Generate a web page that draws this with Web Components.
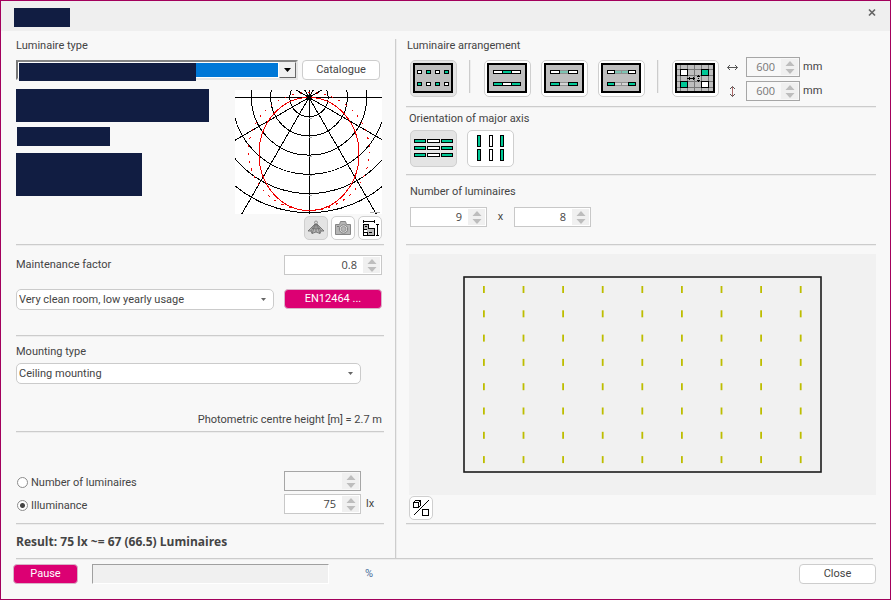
<!DOCTYPE html>
<html lang="en">
<head>
<meta charset="utf-8">
<title>Luminaire layout</title>
<style>
  body { margin: 0; background: #f8f8f8; }
</style>
</head>
<body>
<lux-dialog>
  <luminaire-panel slot="left"></luminaire-panel>
  <arrangement-panel slot="right"></arrangement-panel>
</lux-dialog>

<script>
const BASE = `
  :host, * { box-sizing: border-box; }
  button, input, select { font: inherit; color: inherit; margin: 0; }
  hr { border: 0; height: 2px; margin: 0; background: linear-gradient(#cccccc 50%, #ededed 50%); }
  .row { display: flex; align-items: center; }
  .grow { flex: 1; min-width: 0; }
  svg { display: block; }
`;

function define(name, css, html, options = {}) {
  const template = document.createElement('template');
  template.innerHTML = `<style>${BASE}${css}</style>${html}`;
  customElements.define(name, class extends HTMLElement {
    static formAssociated = !!options.form;
    constructor() {
      super();
      this.attachShadow({ mode: 'open', delegatesFocus: !!options.form });
      this.shadowRoot.append(template.content.cloneNode(true));
    }
    connectedCallback() { options.connected?.call(this, this.shadowRoot); }
  });
}

/* Numeric box with up and down steppers */
define('spin-box', `
  :host { display: flex; height: 20px; width: 77px; border: 1px solid #c8c8c8; background: #fff; }
  :host([muted]) { border-color: #a6a6a6; background: #f8f8f8; color: #777; }
  input { flex: 1; min-width: 0; border: 0; outline: 0; padding: 0 5px 0 0; background: none; text-align: right;
          font: 11px/18px "Open Sans", "Noto Sans", sans-serif; }
  .steps { width: 17px; margin: 1px; background: #f0f0f0; display: flex; flex-direction: column; align-items: center; justify-content: space-between; padding: 1px 0; }
  button { border: 0; padding: 0; background: none; height: 6px; width: 10px; }
`, `
  <input type="text" inputmode="decimal">
  <div class="steps">
    <button type="button" aria-label="Increase"><svg width="10" height="5" viewBox="0 0 10 5"><path d="M5 0L9.500 5H.5z" fill="#bdbdbd"/></svg></button>
    <button type="button" aria-label="Decrease"><svg width="10" height="5" viewBox="0 0 10 5"><path d="M.5 0h9L5 5z" fill="#bdbdbd"/></svg></button>
  </div>
`, { form: true, connected(root) {
  const input = root.querySelector('input');
  input.value = this.getAttribute('value') || '';
  input.setAttribute('aria-label', this.getAttribute('name'));
} });

/* Plain or accented push button */
define('push-button', `
  :host { display: block; height: 20px; }
  button { display: block; width: 100%; height: 100%; padding: 0; border: 1px solid #cdcdcd; border-radius: 4px; background: #fff; line-height: 18px; }
  :host([accent]) button { background: #dc0073; border-color: #d8b4c8; color: #fff; }
`, `<button type="button"><slot></slot></button>`);

/* Toggle button holding an icon */
define('tool-button', `
  :host { display: block; width: 47px; height: 37px; }
  :host([small]) { width: 24px; height: 24px; }
  button { width: 100%; height: 100%; padding: 0; display: flex; align-items: center; justify-content: center; border: 1px solid #cfcfcf; border-radius: 5px; background: #fff; }
  :host([pressed]) button { background: #e4e4e4; }
`, `<button type="button"><slot></slot></button>`, { connected(root) {
  const button = root.querySelector('button');
  button.setAttribute('aria-label', this.getAttribute('name'));
  button.setAttribute('aria-pressed', this.hasAttribute('pressed'));
} });

/* Dark block over private text */
define('masked-block', `:host { display: block; background: #111d42; }`, ``);

/* Polar light distribution curve */
const rays = [0, 30, 60, 90, 120, 150].map(a => {
  const r = a * Math.PI / 180, x = 170 * Math.cos(r), y = 170 * Math.sin(r);
  return `<path d="M${74 - x} ${7.5 - y}L${74 + x} ${7.5 + y}"/>`;
}).join('');
const rings = [1, 2, 3, 4, 5, 6].map(n => `<circle cx="74" cy="7.500" r="${n * 19.2}"/>`).join('');
define('polar-curve', `
  :host { display: block; background: #fff; }
`, `
  <svg width="147" height="124" viewBox="0 0 147 124" fill="none" shape-rendering="crispEdges" role="img" aria-label="Light distribution">
    <g stroke="#000">${rings}${rays}</g>
    <g stroke="#f00000"><ellipse cx="74" cy="64" rx="50" ry="56.500"/>
      <ellipse cx="74" cy="61.500" rx="60.500" ry="59" stroke-dasharray="2 6"/></g>
    <path d="M72 5h4v5h-4z" fill="#000"/>
    <path d="M74 28.500h3M74 47.500h3M74 66.500h3M74 85.500h3M74 105.500h3M135 122.500h4M140 122.500h5" stroke="#aaa"/>
  </svg>
`);

define('luminaire-panel', `
  :host { display: block; padding: 0 11px 0 15px; }
  .end { padding-right: 2px; }
  .type { margin-top: 7px; gap: 4px; padding-right: 4px; }
  .classic { position: relative; display: flex; height: 20px; padding: 1px; background: #fff;
             border: 2px solid; border-color: #858585 #e6e6e6 #e6e6e6 #777; }
  .classic select { flex: 1; min-width: 0; appearance: none; border: 0; border-radius: 0; background: #0078d7; }
  .classic .drop { width: 17px; background: #f0f0f0; border: 1px solid; border-color: #f0f0f0 #696969 #696969 #f0f0f0; display: flex; align-items: center; justify-content: center; margin: -1px; margin-left: 1px; }
  .classic masked-block { position: absolute; left: 1px; top: 1px; bottom: -3px; width: 63.5%; }
  .photo { margin-top: 9px; display: flex; justify-content: space-between; }
  .m1 { width: 193px; height: 33px; }
  .m2 { width: 93px; height: 19px; margin: 5px 0 7px 1px; }
  .m3 { width: 126px; height: 43px; }
  .curve { padding-top: 1px; }
  .tools { display: flex; justify-content: flex-end; gap: 3px; margin: 2px 0 4px; }
  .select { position: relative; display: grid; height: 21px; }
  .select select { appearance: none; width: 100%; border: 1px solid #cbcbcb; border-radius: 5px; background: #fff; padding: 0 20px 0 2px; }
  .select svg { position: absolute; right: 8px; top: 9px; pointer-events: none; }
  .factor { padding: 9px 2px 14px 0; justify-content: space-between; }
  .wide { width: 98px; }
  .room { gap: 10px; align-items: flex-start; padding: 0 2px 25px 0; }
  .en { width: 98px; }
  .mount { display: block; margin: 8px 0 4px; }
  .mount-select { margin-right: 23px; }
  .height { text-align: right; margin: 29px 2px 4px; }
  .targets { margin: 38px 0 9px; display: grid; grid-template-columns: 1fr 77px 18px; gap: 3px 5px; align-items: center; }
  .radio { display: flex; align-items: center; gap: 3px; padding-top: 3px; }
  input[type=radio] { appearance: none; width: 11px; height: 11px; margin: 0 0 0 1px; border: 1px solid #8c8c8c; border-radius: 50%; background: #fff; }
  input[type=radio]:checked { background: radial-gradient(circle, #444 0 2px, #fff 3px); }
  .result { margin: 10px 0 9px; font: bold 12px/14px "Open Sans", "Noto Sans", sans-serif; }
`, `
  <label for="type">Luminaire type</label>
  <div class="row type">
    <div class="classic grow"><select id="type"><option></option></select>
      <span class="drop"><svg width="7" height="4" viewBox="0 0 7 4"><path d="M0 0h7L3.500 4z"/></svg></span>
      <masked-block></masked-block></div>
    <push-button style="width:78px">Catalogue</push-button>
  </div>
  <div class="photo end">
    <div><masked-block class="m1"></masked-block><masked-block class="m2"></masked-block><masked-block class="m3"></masked-block></div>
    <div class="curve"><polar-curve></polar-curve>
      <div class="tools">
        <tool-button small pressed name="Light distribution"><svg width="18" height="16" viewBox="0 0 18 16"><path d="M9 3L1 11l3 0L5 13.500l4-1.500 4 1.500 1-2.500 3 0z" fill="#b5b5b5" stroke="#666" stroke-width=".8"/><path d="M9 3L4 11M9 3l-4 10.500M9 3v9M9 3l4 10.500M9 3l5 8M4.500 8q4.500 2 9 0" fill="none" stroke="#666" stroke-width=".7"/><circle cx="9" cy="2.500" r="1.500" fill="#ddd" stroke="#777" stroke-width=".7"/></svg></tool-button>
        <tool-button small name="Photo"><svg width="16" height="16" viewBox="0 0 16 16"><path d="M.5 4.500h4l1-3h5l1 3h4v10H.5z" fill="#b5b5b5" stroke="#858585"/><circle cx="8.500" cy="9" r="4.200" fill="#ddd" stroke="#808080"/><circle cx="8.500" cy="9" r="2.500" fill="#b5b5b5" stroke="#999"/><path d="M2 6.500h2" stroke="#777"/></svg></tool-button>
        <tool-button small name="Dimensions"><svg width="17" height="17" viewBox="0 0 17 17" shape-rendering="crispEdges"><path d="M1 1.500h12M1.500 0v3M12.500 0v3M15.500 4v12M14 4.500h3M14 15.500h3" stroke="#000" fill="none"/><path d="M1.500 4.500h5v4h6v7h-11z" fill="#bbb" stroke="#000"/><path d="M2 10h3v5H2z" fill="#fff"/><path d="M3 6.500h2M1 9.500h4M1 12.500h4M5.500 12v4M7 12.500h3" stroke="#000" fill="none"/></svg></tool-button>
      </div></div>
  </div>
  <hr>
  <div class="row factor"><label for="mf">Maintenance factor</label><spin-box id="mf" class="wide" name="Maintenance factor" value="0.8"></spin-box></div>
  <div class="row room">
    <div class="select grow"><select aria-label="Room condition"><option>Very clean room, low yearly usage</option></select><svg width="5" height="3" viewBox="0 0 5 3"><path d="M0 0h5L2.500 3z" fill="#666"/></svg></div>
    <push-button accent class="en">EN12464 ...</push-button>
  </div>
  <hr>
  <label class="mount" for="mount">Mounting type</label>
  <div class="select mount-select"><select id="mount"><option>Ceiling mounting</option></select><svg width="5" height="3" viewBox="0 0 5 3"><path d="M0 0h5L2.500 3z" fill="#666"/></svg></div>
  <div class="height">Photometric centre height [m] = 2.7 m</div>
  <hr>
  <div class="targets">
    <label class="radio"><input type="radio" name="goal">Number of luminaires</label><spin-box muted name="Number of luminaires"></spin-box><span></span>
    <label class="radio"><input type="radio" name="goal" checked>Illuminance</label><spin-box name="Illuminance" value="75"></spin-box><span>lx</span>
  </div>
  <hr>
  <div class="result">Result: 75 lx ~= 67 (66.5) Luminaires</div>
`);

/* Icon parts: outlined bars in the icons' 40 by 30 grid */
const G = '#00c896', W = '#fff';
const bar = (x, y, w, h, fill, stroke = '#000') =>
  `<rect x="${x + .5}" y="${y + .5}" width="${w - 1}" height="${h - 1}" fill="${fill}" stroke="${stroke}"/>`;
const icon = inner => `<svg width="41" height="31" viewBox="0 0 41 31" shape-rendering="crispEdges">${inner}</svg>`;
const board = inner => icon(`<rect x="1" y="1" width="38" height="28" fill="#bfbfbf" stroke="#000" stroke-width="2"/>${inner}`);
const FG = '#7cc4b2', FW = '#d4d4d4', FS = '#909090';
const single = board([4, 13, 22, 31].map((x, i) => bar(x, 7, 5, 4, i % 2 ? G : W) + bar(x, 19, 5, 4, i % 2 ? W : G)).join(''));
const lines = board(bar(6, 7, 10, 4, W) + bar(24, 7, 10, 4, W) + bar(15, 7, 10, 4, G) + bar(6, 19, 10, 4, G) + bar(24, 19, 10, 4, G) + bar(15, 19, 10, 4, W));
const gap1 = board(bar(15, 7, 10, 4, FG, FS) + bar(15, 19, 10, 4, FW, FS) + bar(6, 7, 10, 4, W) + bar(24, 7, 10, 4, W) + bar(6, 19, 10, 4, G) + bar(24, 19, 10, 4, G));
const gap2 = board([13, 20].map(x => bar(x, 7, 8, 4, FG, FS) + bar(x, 19, 8, 4, FW, FS)).join('') + bar(6, 7, 8, 4, W) + bar(27, 7, 8, 4, W) + bar(6, 19, 8, 4, G) + bar(27, 19, 8, 4, G));
const raster = board(`<path d="M5.500 2v26M12.500 2v26M19.500 2v26M26.500 2v26M33.500 2v26M2 6.500h36M2 12.500h36M2 18.500h36M2 24.500h36" stroke="#777"/>`
  + bar(5, 6, 8, 7, W) + bar(26, 6, 8, 7, G) + bar(5, 18, 8, 7, G) + bar(26, 18, 8, 7, W)
  + `<path d="M12 15.500h8M14.500 14v3M18.500 14v3M23.500 12v2M23.500 15v1M23.500 17v2M22 13.500h3M22 17.500h3" stroke="#000"/>`);
const across = icon([6, 13, 20].map(y => bar(1, y, 12, 4, G) + bar(14, y, 13, 4, W) + bar(28, y, 12, 4, G)).join(''));
const along = icon([2, 16].map(y => bar(7, y, 4, 12, G) + bar(19, y, 4, 12, W) + bar(30, y, 4, 12, G)).join(''));

/* Plan of the room: 9 by 8 luminaires */
let marks = '';
for (let r = 0; r < 8; r++) for (let c = 0; c < 9; c++)
  marks += `<rect x="${74 + c * 39.6}" y="${32 + r * 24.3}" width="1.800" height="7"/>`;

define('arrangement-panel', `
  :host { display: flex; flex-direction: column; padding: 0 14px 33px 10px; border-left: 1px solid #cdcdcd; box-shadow: inset 1px 0 #ededed; }
  .title { padding-left: 1px; }
  .arrange { display: flex; flex-wrap: wrap; align-items: flex-start; margin: 4px 0 5px; padding-left: 4px; }
  .set { display: flex; gap: 10px; padding-top: 3px; }
  .sep { width: 2px; height: 33px; margin: 3px 13px 0 12px; background: linear-gradient(90deg, #ccc 50%, #ededed 50%); }
  .spacing { display: grid; grid-template-columns: 11px 54px auto; gap: 4px 8px; align-items: center; margin-left: 8px; }
  .spacing spin-box { width: 54px; }
  .unit { margin-left: -5px; }
  .spacing svg { justify-self: center; }
  .sub { padding: 4px 0 4px 3px; }
  .axis { display: flex; gap: 10px; padding: 0 0 7px 4px; }
  .count { padding: 9px 0 8px 4px; }
  .counts { padding: 0 0 17px 4px; gap: 10px; }
  .counts span { width: 7px; text-align: center; }
  .plan { flex: 1; margin: 8px 0 1px 3px; background: #f1f1f1; display: flex; }
  .plan svg { width: 100%; height: auto; margin: auto; }
  .view { margin: 0 0 3px 3px; }
`, `
  <div class="title">Luminaire arrangement</div>
  <div class="arrange">
    <div class="set"><tool-button pressed name="Single">${single}</tool-button></div>
    <div class="sep"></div>
    <div class="set"><tool-button name="Lines">${lines}</tool-button><tool-button name="Lines, single gap">${gap1}</tool-button><tool-button name="Lines, double gap">${gap2}</tool-button></div>
    <div class="sep"></div>
    <div class="set"><tool-button name="Ceiling grid">${raster}</tool-button></div>
    <div class="spacing">
      <svg width="11" height="7" viewBox="0 0 11 7" fill="none" stroke="#555"><path d="M.5 3.500h10M3 1L.5 3.500 3 6M8 1l2.500 2.500L8 6"/></svg>
      <spin-box muted name="Horizontal grid" value="600"></spin-box><span class="unit">mm</span>
      <svg width="7" height="11" viewBox="0 0 7 11" fill="none" stroke="#555"><path d="M3.500 .5v10" stroke="#a66"/><path d="M1 3L3.500 .5 6 3M1 8l2.500 2.500L6 8"/></svg>
      <spin-box muted name="Vertical grid" value="600"></spin-box><span class="unit">mm</span>
    </div>
  </div>
  <hr>
  <div class="sub">Orientation of major axis</div>
  <div class="axis"><tool-button pressed name="Across">${across}</tool-button><tool-button name="Along">${along}</tool-button></div>
  <hr>
  <label class="count" for="cols">Number of luminaires</label>
  <div class="row counts"><spin-box id="cols" name="Columns" value="9"></spin-box><span>x</span><spin-box name="Rows" value="8"></spin-box></div>
  <hr>
  <div class="plan"><svg viewBox="0 0 467 241" role="img" aria-label="Room plan"><rect x="55" y="23" width="357" height="195" fill="none" stroke="#1c1c1c" stroke-width="1.600"/><g fill="#bdbd00">${marks}</g></svg></div>
  <tool-button small class="view" name="2D or 3D view"><svg width="16" height="16" viewBox="0 0 16 16" fill="none" stroke="#000" shape-rendering="crispEdges"><path d="M.5 2.500h5v5h-5zM.5 2.500l2-2h5v5l-2 2M5.500 2.500l2-2" stroke-width="1.200"/><path d="M15.500 .5L.5 15.500"/><path d="M9.500 9.500h6v6h-6z"/></svg></tool-button>
  <hr>
`);

define('lux-dialog', `
  :host { display: flex; flex-direction: column; min-height: 100vh; border: 1px solid #a3005c; background: #f8f8f8; color: #444;
          font: 11px/14px Roboto, "Liberation Sans", sans-serif; }
  header { display: flex; justify-content: space-between; align-items: flex-start; height: 30px; background: #efefef; padding: 7px 13px 0; }
  header masked-block { width: 56px; height: 19px; }
  header button { border: 0; background: none; padding: 0; }
  main { flex: 1; display: grid; grid-template-columns: 394fr 495fr; padding-top: 8px; }
  .line { margin: 0 17px 0 15px; }
  footer { display: flex; align-items: center; padding: 4px 14px 15px 12px; }
  .pause { width: 65px; }
  progress { appearance: none; flex: 0 1 237px; min-width: 0; height: 20px; margin: 0 36px 0 14px; border: 1px solid; border-color: #a0a0a0 #fff #fff #a0a0a0; background: #f0f0f0; }
  progress::-webkit-progress-bar { background: #f0f0f0; }
  .percent { flex: 1; color: #4a6f9c; }
  .close { width: 77px; }
`, `
  <header><masked-block></masked-block><button type="button" aria-label="Close window"><svg width="9" height="9" viewBox="0 0 9 9"><path d="M1 1.500l6 6M7 1.500l-6 6" stroke="#666" stroke-width="1.700"/></svg></button></header>
  <main><slot name="left"></slot><slot name="right"></slot></main>
  <hr class="line">
  <footer>
    <push-button accent class="pause">Pause</push-button>
    <progress value="0" max="100" aria-label="Calculation progress"></progress>
    <span class="percent">%</span>
    <push-button class="close">Close</push-button>
  </footer>
`);
</script>
</body>
</html>
